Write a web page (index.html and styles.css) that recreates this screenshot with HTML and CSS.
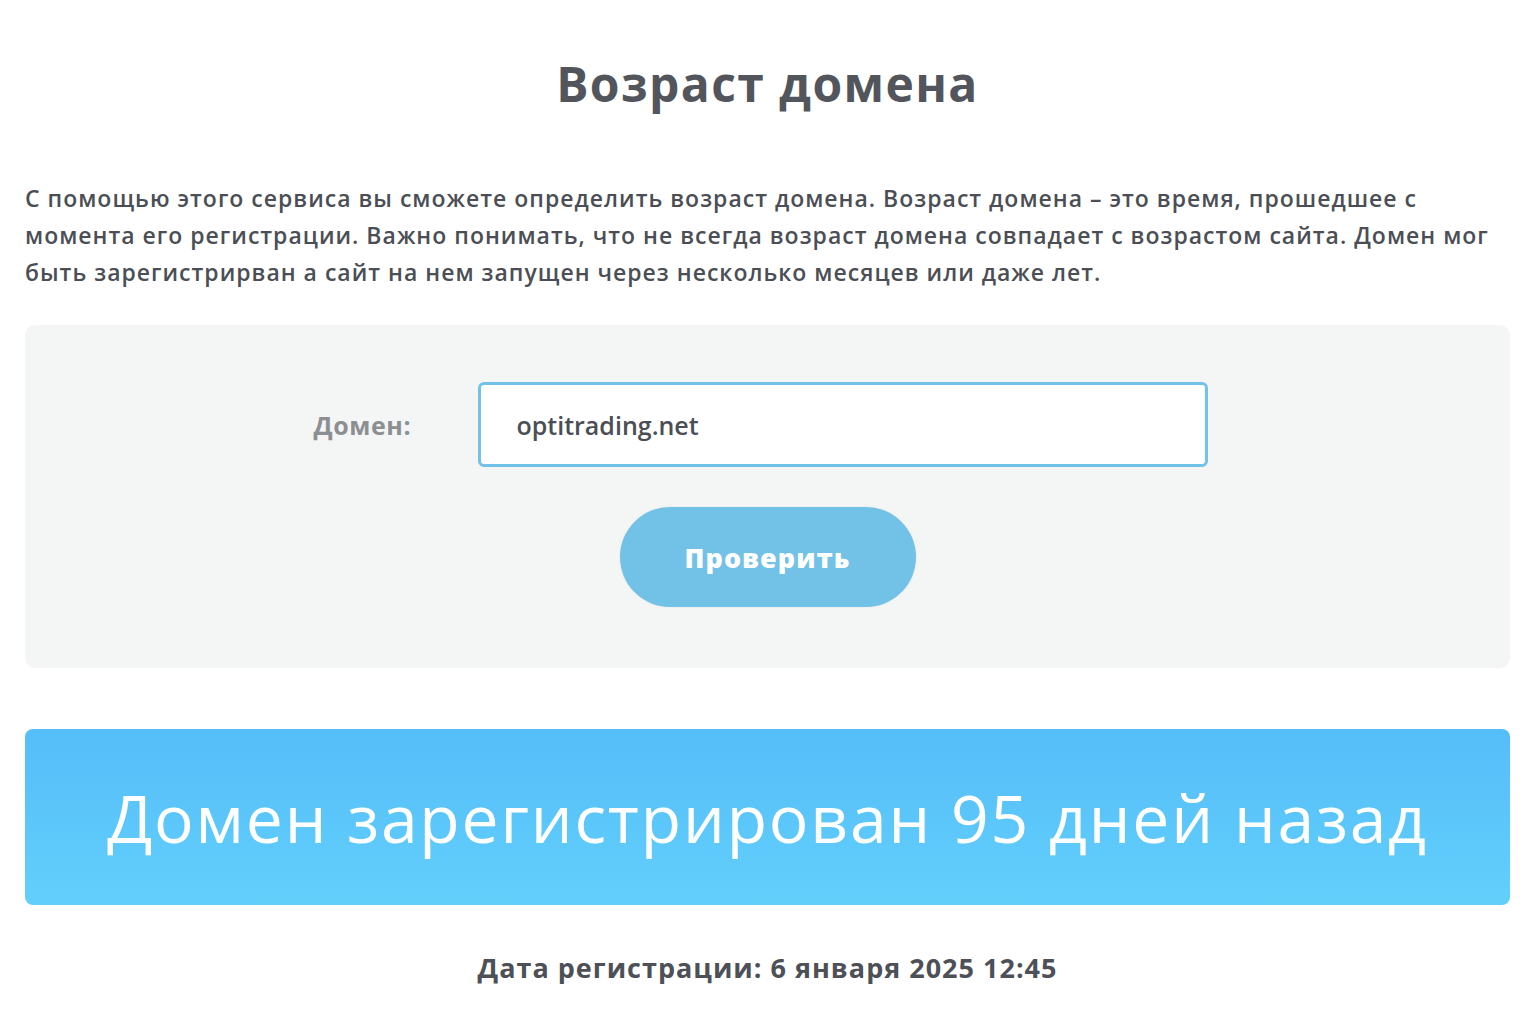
FILE: index.html
```html
<!DOCTYPE html>
<html lang="ru">
<head>
    <meta charset="UTF-8">
    <meta name="viewport" content="width=device-width, initial-scale=1.0">
    <title>Возраст домена</title>
    <link rel="stylesheet" href="styles.css">
</head>
<body>

<div class="page">
    <h1 class="title">Возраст домена</h1>
    <p class="intro">С помощью этого сервиса вы сможете определить возраст домена. Возраст домена – это время, прошедшее с момента его регистрации. Важно понимать, что не всегда возраст домена совпадает с возрастом сайта. Домен мог быть зарегистрирван а сайт на нем запущен через несколько месяцев или даже лет.</p>

    <div class="check-box">
        <div class="form-row">
            <label for="domain">Домен:</label>
            <input type="text" id="domain" name="domain" value="optitrading.net">
        </div>
        <button class="check-btn">Проверить</button>
    </div>

    <div class="result">Домен зарегистрирован 95 дней назад</div>
    <div class="reg-date">Дата регистрации: 6 января 2025 12:45</div>
</div>

</body>
</html>
```

FILE: styles.css
```css
body {
    margin: 0;
    font-family: "Open Sans", Arial, sans-serif;
    background-color: #fff;
    color: #4b4f55;
}
.page {
    padding: 0 24px 0 25px;
}
.title {
    margin: 0;
    padding-top: 54px;
    font-size: 48px;
    font-weight: 700;
    letter-spacing: 1.4px;
    text-align: center;
    color: #52565c;
    line-height: 60px;
}
.intro {
    margin: 66px 0 0;
    font-size: 23px;
    line-height: 37px;
    font-weight: 600;
    letter-spacing: 1px;
    color: #4b4f55;
}
.check-box {
    margin-top: 34px;
    background-color: #f4f5f5;
    border-radius: 10px;
    padding: 57px 0 61px;
    display: flex;
    flex-direction: column;
    align-items: center;
}
.form-row {
    display: flex;
    align-items: center;
    gap: 64px;
    margin-right: 14px;
}
.form-row label {
    width: 100px;
    font-size: 25px;
    font-weight: 700;
    letter-spacing: 0.6px;
    color: #8c8f91;
    white-space: nowrap;
}
.form-row input {
    width: 730px;
    height: 85px;
    box-sizing: border-box;
    border: 3px solid #72c1e8;
    border-radius: 6px;
    padding: 0 36px;
    font-family: "Open Sans", Arial, sans-serif;
    font-size: 25px;
    font-weight: 600;
    color: #4b4f55;
    background-color: #fff;
    outline: none;
}
.check-btn {
    margin-top: 40px;
    width: 296px;
    height: 100px;
    border: none;
    border-radius: 50px;
    background-color: #72c1e6;
    color: #fff;
    font-family: "Open Sans", Arial, sans-serif;
    font-size: 27px;
    font-weight: 800;
    letter-spacing: 1px;
    cursor: pointer;
    box-shadow: 0 0 2px rgba(0, 0, 0, 0.08);
}
.result {
    margin-top: 61px;
    height: 176px;
    border-radius: 8px;
    background: linear-gradient(to bottom, #55bdf9, #62cffb);
    color: #fff;
    font-size: 66px;
    font-weight: 400;
    letter-spacing: 1.8px;
    display: flex;
    align-items: center;
    justify-content: center;
}
.reg-date {
    margin-top: 44px;
    text-align: center;
    font-size: 27px;
    font-weight: 700;
    letter-spacing: 1px;
    color: #4d5157;
}
```
